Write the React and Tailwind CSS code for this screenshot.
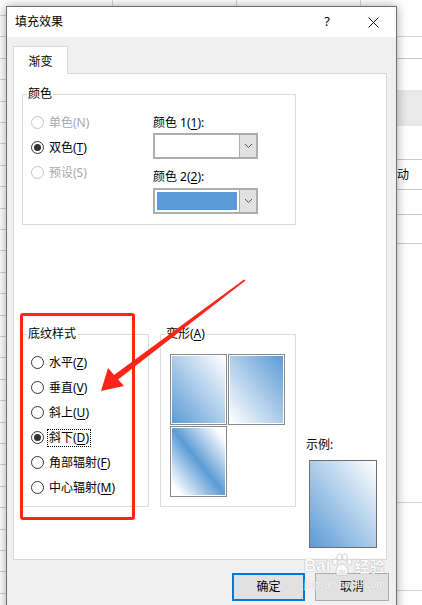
import React from "react";

const FONT = { fontFamily: '"Noto Sans", "Noto Sans CJK SC", sans-serif' };

function Radio({ checked, disabled }) {
  return (
    <span
      className={
        "relative flex h-[13px] w-[13px] shrink-0 items-center justify-center rounded-full border bg-white " +
        (disabled ? "border-[#c4c4c4]" : "border-[#333333]")
      }
    >
      {checked && <span className="h-[7px] w-[7px] rounded-full bg-[#333333]" />}
    </span>
  );
}

function U({ children }) {
  return <span className="underline decoration-1 underline-offset-[2px]">{children}</span>;
}

function RadioRow({ label, checked, disabled, focus }) {
  return (
    <div className="flex h-[25px] items-center">
      <Radio checked={checked} disabled={disabled} />
      <span
        className={
          "ml-[3px] whitespace-nowrap text-[12px] leading-[16px] " +
          (disabled ? "text-[#a8a8a8] " : "text-black ") +
          (focus ? "border border-dotted border-black px-[1px]" : "border border-transparent px-[1px]")
        }
      >
        {label}
      </span>
    </div>
  );
}

function Chevron() {
  return (
    <svg width="9" height="6" viewBox="0 0 9 6">
      <path d="M1 1 L4.5 4.5 L8 1" fill="none" stroke="#555" strokeWidth="1" />
    </svg>
  );
}

function Combo({ blue }) {
  return (
    <div className="flex h-[26px] w-[105px] border-2 border-[#adadad] bg-white">
      <div className="flex flex-1">
        {blue && <div className="m-[2px] flex-1 bg-[#5b9bd5]" />}
      </div>
      <div className="flex w-[17px] items-center justify-center border-l border-[#adadad] bg-[#e1e1e1]">
        <Chevron />
      </div>
    </div>
  );
}

function Tile({ bg }) {
  return (
    <div className="h-[71px] w-[57px] border border-[#858a90] bg-white p-px">
      <div className={"h-full w-full " + bg} />
    </div>
  );
}

function GroupBox({ legend, className, children }) {
  return (
    <div className={"relative border border-[#dcdcdc] " + className}>
      <span className="absolute -top-[9px] left-[4px] bg-white px-[1px] text-[12px] leading-[16px] text-black">
        {legend}
      </span>
      {children}
    </div>
  );
}

function Background() {
  return (
    <div className="flex h-full w-full bg-white">
      <div className="h-full w-[6px] bg-[repeating-linear-gradient(to_bottom,transparent_0px,transparent_15px,#d2d2d2_15px,#d2d2d2_16px,transparent_16px,transparent_21.4px)]" />
      <div className="flex-1">
        <div className="flex h-[6px]">
          <div className="w-[107px] border-r border-[#d6d6d6]" />
          <div className="w-[124px] border-r border-[#d6d6d6]" />
          <div className="w-[124px] border-r border-[#d6d6d6]" />
        </div>
      </div>
      <div className="flex h-full w-[25px] flex-col">
        <div className="h-[37px] border-b border-[#d6d6d6]" />
        <div className="h-[22px] border-b border-[#c9c9c9]" />
        <div className="h-[31px]" />
        <div className="h-[36px] bg-[#e9e9e9]" />
        <div className="h-[34px] border-b border-[#c9c9c9]" />
        <div className="flex h-[30px] items-center justify-end border-b border-[#c9c9c9] pr-[13px]">
          <span className="whitespace-nowrap text-[12px] leading-[14px] text-black">自动</span>
        </div>
        <div className="h-[25px] border-b border-[#c9c9c9]" />
        <div className="h-[29px] border-b border-[#c9c9c9]" />
        <div className="h-[259px] border-b border-[#d6d6d6]" />
        <div className="h-[88px] border-b border-[#d6d6d6]" />
      </div>
    </div>
  );
}

function Paw() {
  return (
    <svg width="24" height="26" viewBox="0 0 24 26">
      <g fill="white" stroke="#c8c8c8" strokeWidth="1">
        <ellipse cx="5" cy="9" rx="2.6" ry="3.2" />
        <ellipse cx="9.5" cy="4" rx="2.6" ry="3.2" />
        <ellipse cx="15" cy="4" rx="2.6" ry="3.2" />
        <ellipse cx="19.5" cy="9" rx="2.6" ry="3.2" />
        <path d="M6 19 C6 13 10 11 12 11 C14 11 18 13 18 19 C18 23 14 23 12 22 C10 23 6 23 6 19 Z" />
      </g>
      <text x="12" y="20" textAnchor="middle" fontSize="6" fill="#c8c8c8" fontFamily="Liberation Sans, sans-serif">du</text>
    </svg>
  );
}

export default function App() {
  return (
    <div className="relative h-[605px] w-[422px] overflow-hidden bg-white" style={FONT}>
      <Background />

      {/* Dialog window */}
      <div className="absolute left-[6px] top-[6px] flex h-[620px] w-[391px] flex-col border border-[#6f6f6f] bg-[#f0f0f0] shadow-[0_0_10px_rgba(0,0,0,0.35)]">
        {/* Title bar */}
        <div className="flex h-[30px] items-center justify-between bg-white">
          <span className="pl-[8px] text-[12px] leading-[16px] text-black">填充效果</span>
          <div className="flex h-full">
            <div className="flex w-[46px] items-center justify-center text-[13px] text-black">?</div>
            <div className="flex w-[46px] items-center justify-center">
              <svg width="11" height="11" viewBox="0 0 11 11">
                <path d="M0.5 0.5 L10.5 10.5 M10.5 0.5 L0.5 10.5" stroke="#111" strokeWidth="1" />
              </svg>
            </div>
          </div>
        </div>

        {/* Body */}
        <div className="flex flex-col pl-[6px] pt-[9px]">
          <div className="relative z-10 -mb-px flex h-[28px] w-[55px] items-center justify-center border-l border-r border-t border-[#d9d9d9] bg-white pt-[2px] text-[12px] leading-[16px] text-black">
            渐变
          </div>
          <div className="h-[487px] w-[374px] border border-[#d9d9d9] bg-white pl-[8px] pt-[20px]">
            {/* Color group */}
            <GroupBox legend="颜色" className="flex h-[131px] w-[274px]">
              <div className="flex w-[130px] flex-col pl-[8px] pt-[15px]">
                <RadioRow label="单色(N)" disabled />
                <RadioRow label={<>双色(<U>T</U>)</>} checked />
                <RadioRow label="预设(S)" disabled />
              </div>
              <div className="flex flex-col pt-[20px]">
                <span className="text-[12px] leading-[16px] text-black">
                  颜色 1(<U>1</U>):
                </span>
                <div className="mt-[2px]">
                  <Combo />
                </div>
                <span className="mt-[10px] text-[12px] leading-[16px] text-black">
                  颜色 2(<U>2</U>):
                </span>
                <div className="mt-[3px]">
                  <Combo blue />
                </div>
              </div>
            </GroupBox>

            {/* Lower row */}
            <div className="mt-[109px] flex items-start">
              <GroupBox legend="底纹样式" className="h-[173px] w-[127px]">
                <div className="flex flex-col pl-[8px] pt-[15px]">
                  <RadioRow label={<>水平(<U>Z</U>)</>} />
                  <RadioRow label={<>垂直(<U>V</U>)</>} />
                  <RadioRow label={<>斜上(<U>U</U>)</>} />
                  <RadioRow label={<>斜下(<U>D</U>)</>} checked focus />
                  <RadioRow label={<>角部辐射(<U>F</U>)</>} />
                  <RadioRow label={<>中心辐射(<U>M</U>)</>} />
                </div>
              </GroupBox>

              <GroupBox legend={<>变形(<U>A</U>)</>} className="ml-[11px] h-[173px] w-[136px]">
                <div className="grid grid-cols-[57px_57px] gap-[1px] pl-[9px] pt-[19px]">
                  <Tile bg="bg-[linear-gradient(to_top_right,#5b9bd5,#ffffff)]" />
                  <Tile bg="bg-[linear-gradient(to_top_right,#ffffff,#5b9bd5)]" />
                  <Tile bg="bg-[linear-gradient(to_top_right,#ffffff_8%,#5b9bd5_50%,#ffffff_92%)]" />
                </div>
              </GroupBox>

              <div className="ml-[10px] flex flex-col pt-[103px]">
                <span className="text-[12px] leading-[16px] text-black">示例:</span>
                <div className="ml-[3px] mt-[7px] h-[88px] w-[68px] border border-[#6e6e6e] bg-[linear-gradient(to_top_right,#5b9bd5,#ffffff)]" />
              </div>
            </div>
          </div>

          {/* Buttons */}
          <div className="mt-[13px] flex justify-end pr-[7px]">
            <div className="flex h-[28px] w-[73px] items-center justify-center border-2 border-[#0078d7] bg-[#e1e1e1] text-[12px] leading-[16px] text-black">
              确定
            </div>
            <div className="ml-[10px] flex h-[28px] w-[74px] items-center justify-center border border-[#adadad] bg-[#e1e1e1] text-[12px] leading-[16px] text-black">
              取消
            </div>
          </div>
        </div>
      </div>

      {/* Baidu watermark */}
      <div className="pointer-events-none absolute left-[304px] top-[553px] flex flex-col opacity-80">
        <div className="flex items-center">
          <span
            className="text-[17px] font-bold leading-[20px] text-white"
            style={{ fontFamily: '"Liberation Sans", sans-serif', textShadow: "0 0 1px #999, 0 0 1px #999" }}
          >
            Bai
          </span>
          <Paw />
          <span
            className="text-[15px] font-bold leading-[20px] text-white"
            style={{ fontFamily: '"Noto Sans CJK SC", sans-serif', textShadow: "0 0 1px #999, 0 0 1px #999" }}
          >
            经验
          </span>
        </div>
        <span
          className="text-[10px] leading-[12px] text-white"
          style={{ fontFamily: '"Liberation Sans", sans-serif', textShadow: "0 0 1px #aaa" }}
        >
          jingyan.baidu.com
        </span>
      </div>

      {/* Red annotation box */}
      <div className="pointer-events-none absolute left-[20px] top-[313px] h-[207px] w-[115px] rounded-[3px] border-[3px] border-[#ff2318]" />

      {/* Red arrow */}
      <svg className="pointer-events-none absolute left-0 top-0" width="422" height="605" viewBox="0 0 422 605">
        <polygon points="115.5,381.5 112,376.5 244,279.5 245.5,280.5" fill="#ff2318" />
        <polygon points="101,391 108,368 124,386" fill="#ff2318" />
      </svg>
    </div>
  );
}
